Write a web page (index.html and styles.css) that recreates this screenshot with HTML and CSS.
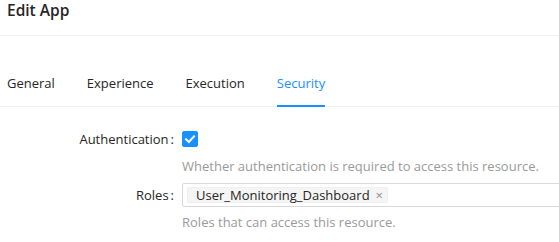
FILE: index.html
```html
<!DOCTYPE html>
<html lang="en">
<head>
  <meta charset="UTF-8" />
  <title>Edit App</title>
  <link rel="stylesheet" href="styles.css">
</head>
<body>

  <!-- Modal header -->
  <div class="modal-header">
    <h1>Edit App</h1>
  </div>

  <!-- Tabs -->
  <div class="tabs">
    <div class="tab">General</div>
    <div class="tab">Experience</div>
    <div class="tab">Execution</div>
    <div class="tab active">Security</div>
  </div>

  <!-- Security form -->
  <form class="form">
    <div class="form-item">
      <label class="form-label">Authentication<span class="colon">:</span></label>
      <div class="form-control">
        <div class="control-row">
          <span class="checkbox checked">
            <svg viewBox="0 0 16 16" width="16" height="16">
              <path d="M4 8.2 L6.9 11 L12 5.4" fill="none" stroke="#fff" stroke-width="2" stroke-linecap="square"/>
            </svg>
          </span>
        </div>
        <div class="form-help">Whether authentication is required to access this resource.</div>
      </div>
    </div>

    <div class="form-item roles">
      <label class="form-label">Roles<span class="colon">:</span></label>
      <div class="form-control">
        <div class="select">
          <span class="tag">User_Monitoring_Dashboard<span class="tag-close">×</span></span>
        </div>
        <div class="form-help">Roles that can access this resource.</div>
      </div>
    </div>
  </form>

</body>
</html>
```

FILE: styles.css
```css
* {
  box-sizing: border-box;
  margin: 0;
  padding: 0;
}

body {
  font-family: 'Open Sans', 'Noto Sans', sans-serif;
  font-size: 13px;
  color: #262626;
  background: #ffffff;
  overflow: hidden;
  width: 559px;
}

.modal-header {
  height: 37px;
  padding: 0 7px;
  border-bottom: 1px solid #f0f0f0;
}

.modal-header h1 {
  font-size: 15.5px;
  font-weight: 600;
  line-height: 22px;
  color: #262626;
  margin-top: -1px;
}

.tabs {
  display: flex;
  gap: 32px;
  margin-top: 25px;
  padding: 0 7px;
  border-bottom: 1px solid #f0f0f0;
}

.tab {
  padding: 11px 0;
  line-height: 22px;
  color: #262626;
  border-bottom: 2px solid transparent;
  margin-bottom: -1px;
}

.tab.active {
  color: #1890ff;
  border-bottom-color: #1890ff;
}

.form {
  padding-top: 16px;
}

.form-item {
  display: grid;
  grid-template-columns: 182px 1fr;
}

.form-item.roles {
  margin-top: 6px;
}

.form-label {
  text-align: right;
  line-height: 32px;
  color: #262626;
  white-space: nowrap;
}

.roles .form-label {
  line-height: 24px;
}

.colon {
  margin: 0 8px 0 2px;
}

.control-row {
  height: 32px;
  display: flex;
  align-items: center;
}

.checkbox {
  width: 16px;
  height: 16px;
  border-radius: 2px;
  border: 1px solid #d9d9d9;
  display: flex;
}

.checkbox.checked {
  background: #1890ff;
  border-color: #1890ff;
}

.checkbox svg {
  margin: -1px;
}

.form-help {
  color: #9a9a9a;
  line-height: 22px;
  min-height: 22px;
}

.roles .form-help {
  margin-top: 4px;
}

.select {
  height: 24px;
  border: 1px solid #d9d9d9;
  border-radius: 2px;
  padding: 0 4px;
  margin-right: -20px;
  display: flex;
  align-items: center;
}

.tag {
  display: inline-flex;
  align-items: center;
  height: 16px;
  line-height: 14px;
  padding: 0 4px 0 8px;
  background: #f5f5f5;
  border: 1px solid #f0f0f0;
  border-radius: 2px;
  white-space: pre;
}

.tag-close {
  color: #8c8c8c;
  font-size: 13px;
  margin-left: 6px;
}
```
